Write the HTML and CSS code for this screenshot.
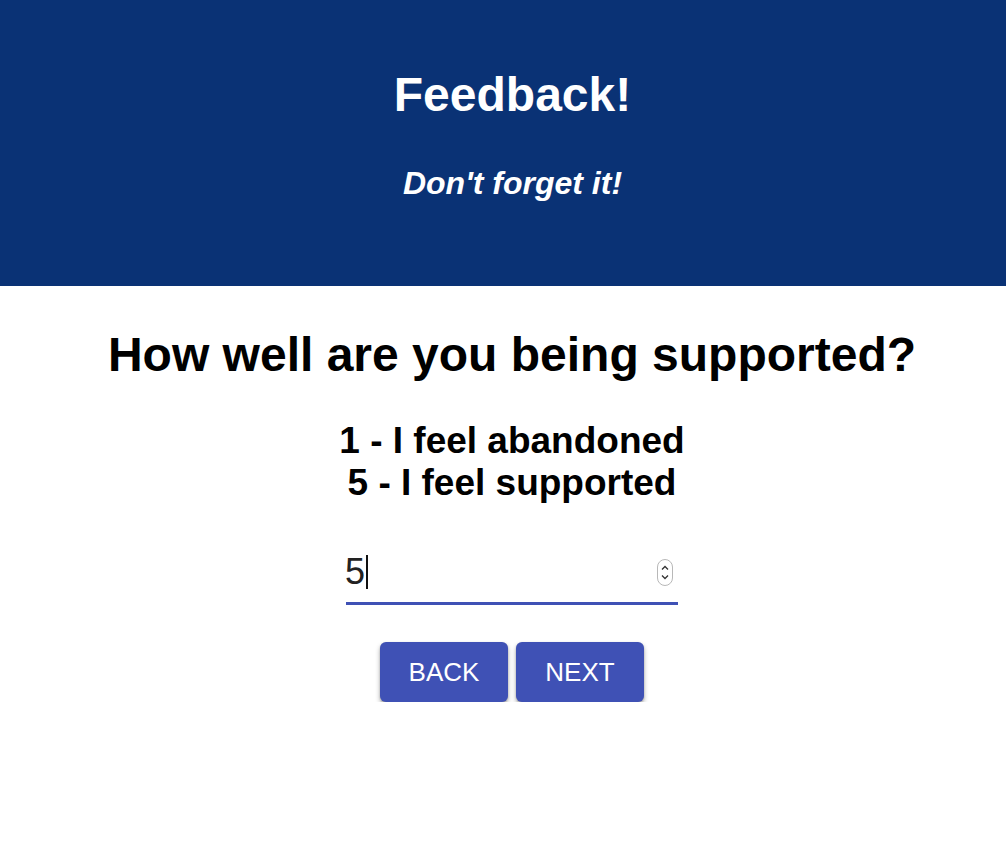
FILE: index.html
```html
<!DOCTYPE html>
<html lang="en">
<head>
<meta charset="utf-8">
<title>Feedback</title>
<link rel="stylesheet" href="styles.css">
</head>
<body>
<header class="hero">
  <h1 class="hero-title">Feedback!</h1>
  <h2 class="hero-sub">Don't forget it!</h2>
</header>
<main class="content">
  <h2 class="question">How well are you being supported?</h2>
  <div class="scale">
    <div>1 - I feel abandoned</div>
    <div>5 - I feel supported</div>
  </div>
  <div class="field">
    <span class="value">5</span><span class="caret"></span>
    <span class="spacer"></span>
    <span class="spinner">
      <svg width="16" height="27" viewBox="0 0 16 27">
        <rect x="0.5" y="0.5" width="15" height="26" rx="7.5" fill="#fff" stroke="#b8b8b8"/>
        <path d="M5 10.5 L8 7.5 L11 10.5" fill="none" stroke="#333" stroke-width="1.3"/>
        <path d="M5 16.5 L8 19.5 L11 16.5" fill="none" stroke="#333" stroke-width="1.3"/>
      </svg>
    </span>
  </div>
  <div class="actions">
    <button class="btn">BACK</button>
    <button class="btn">NEXT</button>
  </div>
</main>
</body>
</html>
```
FILE: styles.css
```css
html, body {
  margin: 0;
  padding: 0;
  background: #fff;
  font-family: "Liberation Sans", Arial, sans-serif;
}
.hero {
  background: #0a3275;
  color: #fff;
  height: 286px;
  box-sizing: border-box;
  padding-top: 67px;
  padding-left: 19px;
  text-align: center;
}
.hero-title {
  margin: 0;
  font-size: 48px;
  line-height: 56px;
  font-weight: bold;
}
.hero-sub {
  margin: 41px 0 0;
  font-size: 32px;
  line-height: 38px;
  font-weight: bold;
  font-style: italic;
}
.content {
  display: flex;
  flex-direction: column;
  align-items: center;
  text-align: center;
  color: #000;
  padding-left: 18px;
}
.question {
  margin: 41px 0 0;
  font-size: 48px;
  line-height: 56px;
  font-weight: bold;
}
.scale {
  margin-top: 37px;
  font-size: 37px;
  line-height: 42px;
  font-weight: bold;
}
.field {
  margin-top: 48px;
  width: 332px;
  height: 40px;
  padding-bottom: 10px;
  border-bottom: 3px solid #3f51b5;
  display: flex;
  align-items: center;
  box-sizing: content-box;
}
.value {
  font-size: 36px;
  line-height: 40px;
  color: #222;
  margin-left: -1px;
}
.caret {
  width: 2px;
  height: 34px;
  background: #111;
  margin-left: 1px;
}
.spacer {
  flex: 1;
}
.spinner {
  display: flex;
  margin-right: 5px;
}
.actions {
  margin-top: 37px;
  display: flex;
  gap: 8px;
}
.btn {
  width: 128px;
  height: 60px;
  border: none;
  border-radius: 6px;
  background: #3f51b5;
  color: #fff;
  font-family: "Liberation Sans", Arial, sans-serif;
  font-size: 26px;
  padding: 0;
  box-shadow: 0 3px 5px rgba(0,0,0,0.3), 0 1px 2px rgba(0,0,0,0.2);
  cursor: pointer;
}
```
